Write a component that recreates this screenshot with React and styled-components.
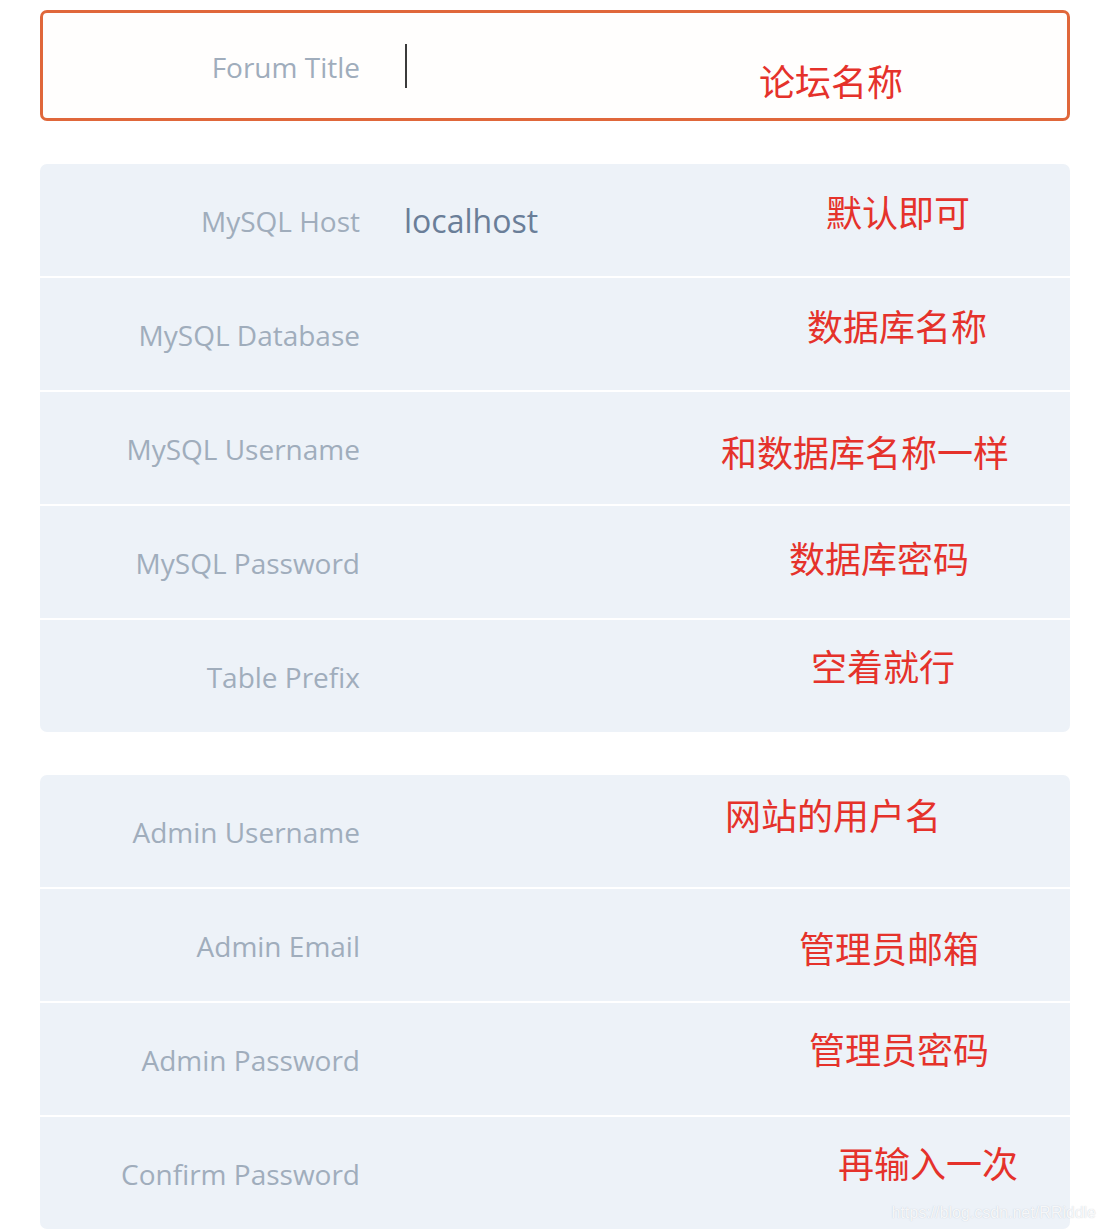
import React from "react";
import styled, { createGlobalStyle } from "styled-components";

const GlobalStyle = createGlobalStyle`
  html, body {
    margin: 0;
    padding: 0;
    background: #ffffff;
  }
  body {
    font-family: "Open Sans", "Noto Sans", "Noto Sans CJK SC", sans-serif;
  }
`;

const dbFields = [
  { label: "MySQL Host", value: "localhost", note: "默认即可", noteX: 786, noteY: 29 },
  { label: "MySQL Database", note: "数据库名称", noteX: 767, noteY: 29 },
  { label: "MySQL Username", note: "和数据库名称一样", noteX: 681, noteY: 41 },
  { label: "MySQL Password", note: "数据库密码", noteX: 749, noteY: 33 },
  { label: "Table Prefix", note: "空着就行", noteX: 771, noteY: 27 },
];

const adminFields = [
  { label: "Admin Username", note: "网站的用户名", noteX: 685, noteY: 21 },
  { label: "Admin Email", note: "管理员邮箱", noteX: 759, noteY: 40 },
  { label: "Admin Password", note: "管理员密码", noteX: 769, noteY: 27 },
  { label: "Confirm Password", note: "再输入一次", noteX: 798, noteY: 27 },
];

const Field = ({ label, value, note, noteX, noteY }) => (
  <Row>
    <Label>{label}</Label>
    <Value>{value}</Value>
    <Note style={{ left: noteX, top: noteY }}>{note}</Note>
  </Row>
);

const App = () => (
  <Page>
    <GlobalStyle />
    <TitleBox>
      <Label $inset>Forum Title</Label>
      <InputArea>
        <Caret />
      </InputArea>
      <Note style={{ left: 716, top: 49 }}>论坛名称</Note>
    </TitleBox>

    <Group>
      {dbFields.map((f) => (
        <Field key={f.label} {...f} />
      ))}
    </Group>

    <Group>
      {adminFields.map((f) => (
        <Field key={f.label} {...f} />
      ))}
    </Group>

    <Watermark>https://blog.csdn.net/RRiddle</Watermark>
  </Page>
);

const Page = styled.div`
  position: relative;
  width: 1106px;
  height: 1232px;
  box-sizing: border-box;
  padding: 10px 36px 0 40px;
  display: flex;
  flex-direction: column;
  gap: 43px;
  overflow: hidden;
`;

const TitleBox = styled.div`
  position: relative;
  height: 111px;
  box-sizing: border-box;
  border: 3px solid #e0673a;
  border-radius: 7px;
  background: #fffefd;
  display: flex;
  align-items: center;
  gap: 45px;
`;

const InputArea = styled.div`
  display: flex;
  align-items: center;
  height: 100%;
`;

const Caret = styled.span`
  display: block;
  width: 2px;
  height: 44px;
  background: #3b3b3b;
`;

const Group = styled.div`
  display: flex;
  flex-direction: column;
  gap: 2px;
  border-radius: 7px;
  overflow: hidden;
  background: #ffffff;
`;

const Row = styled.div`
  position: relative;
  height: 112px;
  display: flex;
  align-items: center;
  gap: 44px;
  background: #edf2f8;
`;

const Label = styled.div`
  width: ${(props) => (props.$inset ? "317px" : "320px")};
  flex-shrink: 0;
  text-align: right;
  font-size: 28px;
  color: #a0adbc;
  margin-top: 2px;
`;

const Value = styled.div`
  font-size: 32px;
  color: #6a7e98;
`;

const Note = styled.div`
  position: absolute;
  font-family: "Noto Sans CJK SC", sans-serif;
  font-size: 36px;
  line-height: 1;
  color: #e5322b;
  white-space: nowrap;
`;

const Watermark = styled.div`
  position: absolute;
  right: 10px;
  bottom: 10px;
  font-family: "Liberation Sans", sans-serif;
  font-size: 16px;
  color: rgba(255, 255, 255, 0.85);
  text-shadow: 0 0 1px rgba(160, 170, 185, 0.6);
`;

export default App;
